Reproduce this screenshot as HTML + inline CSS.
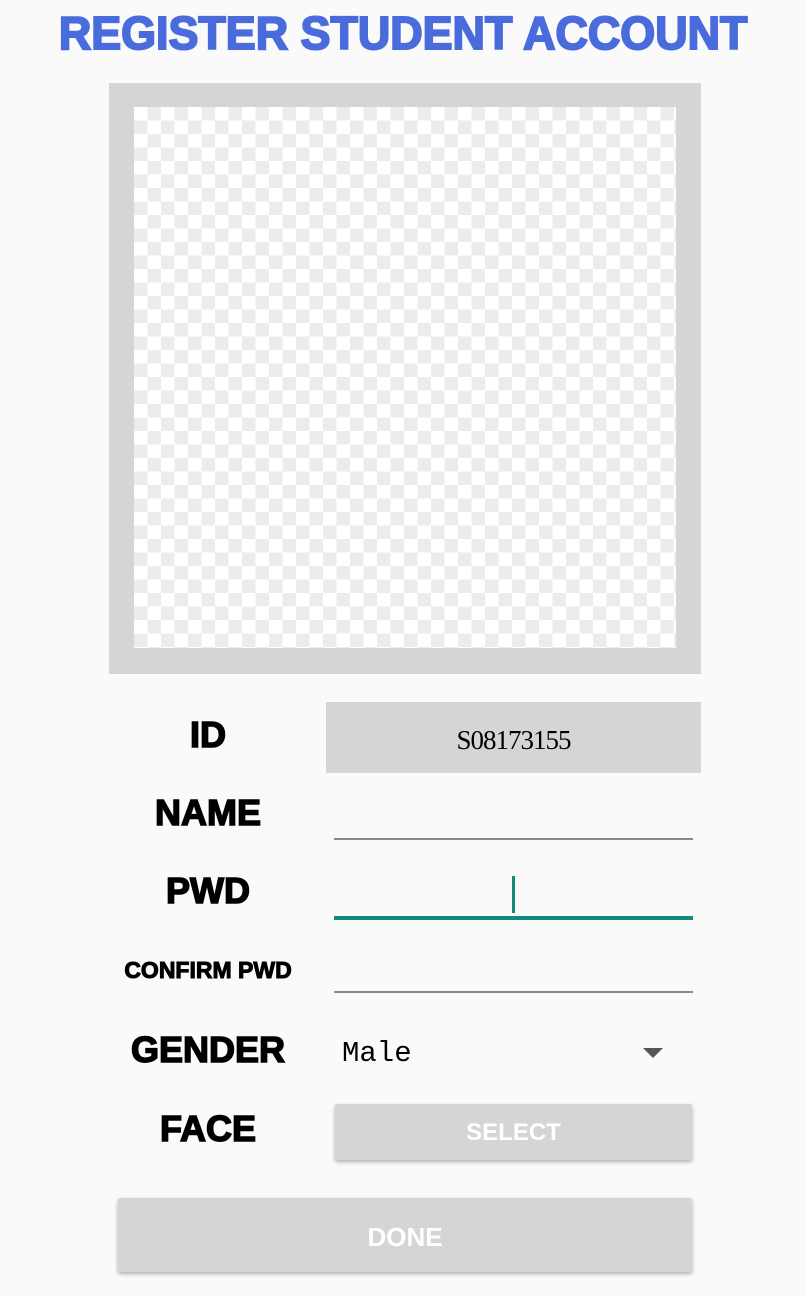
<!DOCTYPE html>
<html><head><meta charset="utf-8"><style>
body{margin:0;width:806px;height:1296px;background:#fafafa;position:relative;overflow:hidden;font-family:"Liberation Sans",sans-serif}
.abs{position:absolute}
.title{left:0;width:806px;top:6px;text-align:center;color:#4a6bdc;font-weight:900;font-size:46px;white-space:nowrap;-webkit-text-stroke:2px #4a6bdc}
.title span{display:inline-block;transform:scaleX(0.975)}
.frame{left:109px;top:83px;width:592px;height:591px;background:#d5d5d5}
.chk{left:134px;top:107px;width:542px;height:541px;background-color:#fff;background-image:conic-gradient(#ececec 25%,transparent 25% 50%,#ececec 50% 75%,transparent 75%);background-size:27px 27px;background-position:0 0}
.lbl{width:200px;left:108px;text-align:center;font-weight:900;color:#000;font-size:36px;-webkit-text-stroke:1.5px #000}
.line{left:334px;width:359px;height:2px;background:#8a8a8a}
.btn{background:#d5d5d5;box-shadow:0 2px 4px rgba(0,0,0,.3);color:#fff;font-weight:900;text-align:center;border-radius:2px}
</style></head><body>
<div class="abs title"><span>REGISTER STUDENT ACCOUNT</span></div>
<div class="abs frame"></div>
<div class="abs chk"></div>

<div class="abs lbl" style="top:714px">ID</div>
<div class="abs" style="left:326px;top:702px;width:375px;height:71px;background:#d5d5d5;font-family:'Liberation Serif',serif;font-size:27px;text-align:center;line-height:76px;letter-spacing:-1px">S08173155</div>

<div class="abs lbl" style="top:792px">NAME</div>
<div class="abs line" style="top:838px"></div>

<div class="abs lbl" style="top:870px">PWD</div>
<div class="abs" style="left:512px;top:876px;width:3px;height:37px;background:#128a7c"></div>
<div class="abs line" style="top:916px;height:4px;background:#128a7c"></div>

<div class="abs lbl" style="top:957px;font-size:23px;-webkit-text-stroke:1px #000">CONFIRM PWD</div>
<div class="abs line" style="top:991px"></div>

<div class="abs lbl" style="top:1029px">GENDER</div>
<div class="abs" style="left:342px;top:1037px;font-family:'Liberation Mono',monospace;font-size:29px">Male</div>
<div class="abs" style="left:643px;top:1048px;width:0;height:0;border-left:10px solid transparent;border-right:10px solid transparent;border-top:10px solid #555"></div>

<div class="abs lbl" style="top:1108px">FACE</div>
<div class="abs btn" style="left:335px;top:1104px;width:357px;height:56px;line-height:58px;font-size:24px">SELECT</div>

<div class="abs btn" style="left:118px;top:1198px;width:574px;height:74px;line-height:78px;font-size:26px">DONE</div>
</body></html>
